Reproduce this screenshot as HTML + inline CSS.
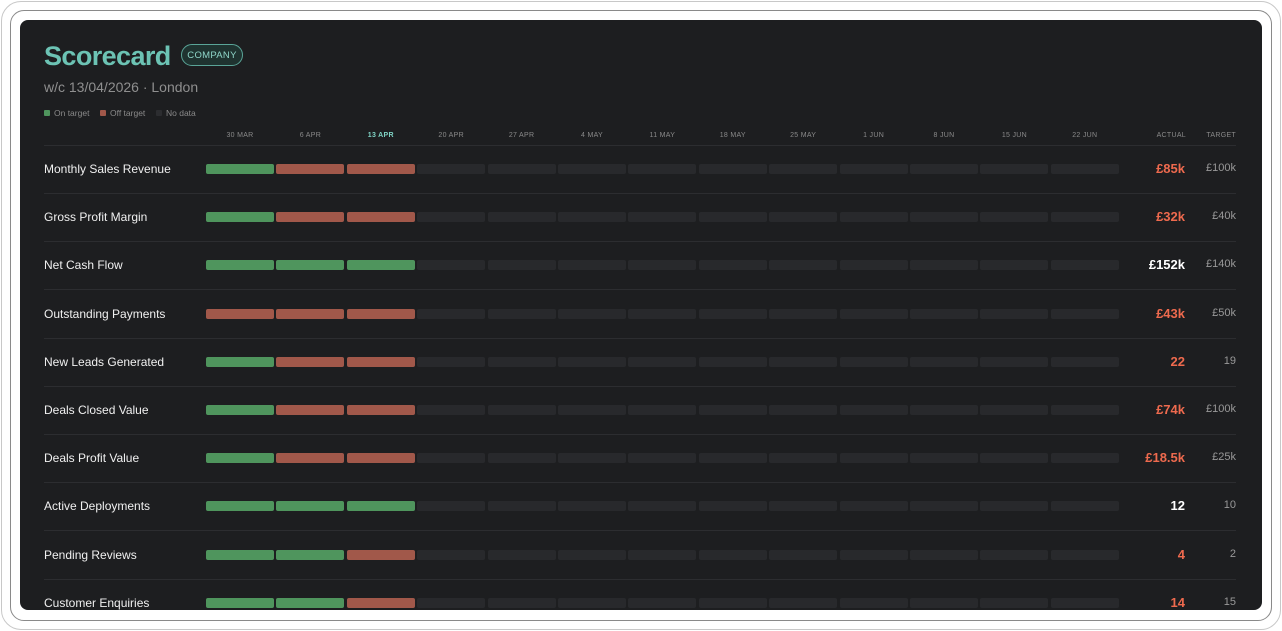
<!DOCTYPE html><html><head><style>
body{margin:0;width:1282px;height:631px;background:#fff;font-family:"Liberation Sans",sans-serif;overflow:hidden;position:relative}
.o1{position:absolute;left:1px;top:1px;width:1278px;height:627px;border:1px solid #c8c8c8;border-radius:20px}
.o2{position:absolute;left:10px;top:10px;width:1260px;height:609px;border:1px solid #8a8a8a;border-radius:14px}
.p{position:absolute;left:20px;top:20px;width:1242px;height:590px;background:#1d1e20;border-radius:8px;overflow:hidden}
.t{position:absolute;left:24px;top:21px;font-size:27px;font-weight:bold;color:#6cc3b4;letter-spacing:-0.6px}
.b{position:absolute;left:161px;top:24px;width:60px;height:20px;border:1px solid #5aa598;border-radius:11px;background:#1f3330;color:#8fd6c9;font-size:9.5px;line-height:22px;text-align:center;letter-spacing:.3px}
.s{position:absolute;left:24px;top:59px;font-size:14px;color:#8f8f8f}
.lg{position:absolute;top:88px;font-size:8.5px;color:#8a8a8a}
.lg i{display:inline-block;width:6px;height:6px;border-radius:1px;margin-right:4px;vertical-align:0}
.d{position:absolute;top:112px;font-size:7px;color:#8a8a8a;width:68px;text-align:center;letter-spacing:.3px}
.hl{position:absolute;left:24px;top:125px;width:1192px;height:1px;background:#2c2d30}
.r{position:absolute;left:24px;width:1192px;height:48px;border-bottom:1px solid #2c2d30}
.n{position:absolute;left:0;top:17px;font-size:12px;color:#f0f0f0}
.bar{position:absolute;top:19px;width:68px;height:10px;border-radius:2px;background:#28292c}
.g{background:#4f955d}.x{background:#a1584a}
.a{position:absolute;right:51px;top:16px;font-size:13px;font-weight:bold;color:#ee6a4e}
.w{color:#fff}
.tg{position:absolute;right:0;top:17px;font-size:11px;color:#999}
</style></head><body>
<div class="o1"></div><div class="o2"></div>
<div class="p">
<div class="t">Scorecard</div><div class="b">COMPANY</div>
<div class="s">w/c 13/04/2026 · London</div>
<div class="lg" style="left:24px"><i style="background:#4f955d"></i>On target</div>
<div class="lg" style="left:80px"><i style="background:#a1584a"></i>Off target</div>
<div class="lg" style="left:136px"><i style="background:#2c2d30"></i>No data</div>
<div id="h"></div>
<div class="d" style="left:1126px;width:40px;text-align:right">ACTUAL</div>
<div class="d" style="left:1176px;width:40px;text-align:right">TARGET</div>
<div class="hl"></div>
<div id="rows"></div>
</div>
<script>
var dates=["30 MAR","6 APR","13 APR","20 APR","27 APR","4 MAY","11 MAY","18 MAY","25 MAY","1 JUN","8 JUN","15 JUN","22 JUN"];
var h="";dates.forEach(function(d,i){h+='<div class="d" style="left:'+(186+i*70.4)+'px;'+(i==2?'color:#7fd3c4;font-weight:bold':'')+'">'+d+'</div>'});
document.getElementById('h').outerHTML=h;
var rows=[["Monthly Sales Revenue","gxx","£85k",0,"£100k"],["Gross Profit Margin","gxx","£32k",0,"£40k"],["Net Cash Flow","ggg","£152k",1,"£140k"],["Outstanding Payments","xxx","£43k",0,"£50k"],["New Leads Generated","gxx","22",0,"19"],["Deals Closed Value","gxx","£74k",0,"£100k"],["Deals Profit Value","gxx","£18.5k",0,"£25k"],["Active Deployments","ggg","12",1,"10"],["Pending Reviews","ggx","4",0,"2"],["Customer Enquiries","ggx","14",0,"15"]];
var s="";rows.forEach(function(r,k){s+='<div class="r" style="top:'+(125+k*48.2)+'px"><div class="n">'+r[0]+'</div>';
for(var i=0;i<13;i++){var c=i<3?r[1][i]:'';s+='<div class="bar '+c+'" style="left:'+(162+i*70.4)+'px"></div>'}
s+='<div class="a'+(r[3]?' w':'')+'">'+r[2]+'</div><div class="tg">'+r[4]+'</div></div>'});
document.getElementById('rows').outerHTML=s;
</script>
</body></html>
